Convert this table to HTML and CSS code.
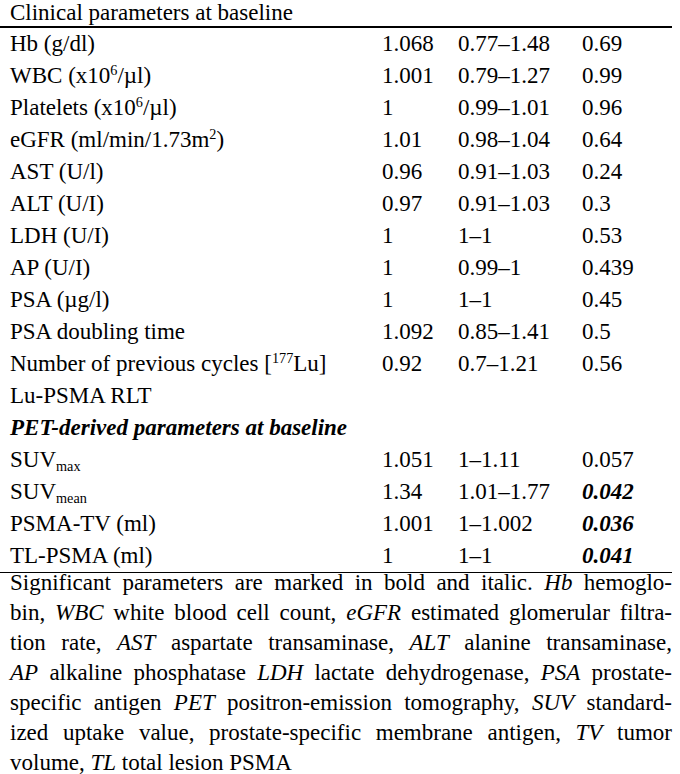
FILE: index.html
```html
<!DOCTYPE html>
<html lang="en">
<head>
  <meta charset="UTF-8">
  <meta name="viewport" content="width=device-width, initial-scale=1.0">
  <title>Clinical parameters at baseline</title>
  <link rel="stylesheet" href="styles.css">
</head>
<body>
  <div class="sheet">
    <div class="caption">Clinical parameters at baseline</div>

    <!-- table body -->
    <table class="params">
      <colgroup>
        <col class="c-name">
        <col class="c-hr">
        <col class="c-ci">
        <col class="c-p">
      </colgroup>
      <tbody>
        <tr><td class="name">Hb (g/dl)</td><td>1.068</td><td>0.77–1.48</td><td>0.69</td></tr>
        <tr><td class="name">WBC (x10<sup>6</sup>/µl)</td><td>1.001</td><td>0.79–1.27</td><td>0.99</td></tr>
        <tr><td class="name">Platelets (x10<sup>6</sup>/µl)</td><td>1</td><td>0.99–1.01</td><td>0.96</td></tr>
        <tr><td class="name">eGFR (ml/min/1.73m<sup>2</sup>)</td><td>1.01</td><td>0.98–1.04</td><td>0.64</td></tr>
        <tr><td class="name">AST (U/l)</td><td>0.96</td><td>0.91–1.03</td><td>0.24</td></tr>
        <tr><td class="name">ALT (U/I)</td><td>0.97</td><td>0.91–1.03</td><td>0.3</td></tr>
        <tr><td class="name">LDH (U/I)</td><td>1</td><td>1–1</td><td>0.53</td></tr>
        <tr><td class="name">AP (U/I)</td><td>1</td><td>0.99–1</td><td>0.439</td></tr>
        <tr><td class="name">PSA (µg/l)</td><td>1</td><td>1–1</td><td>0.45</td></tr>
        <tr><td class="name">PSA doubling time</td><td>1.092</td><td>0.85–1.41</td><td>0.5</td></tr>
        <tr><td class="name">Number of previous cycles [<sup>177</sup>Lu]<br>Lu-PSMA RLT</td><td>0.92</td><td>0.7–1.21</td><td>0.56</td></tr>
        <tr><td class="name group" colspan="4">PET-derived parameters at baseline</td></tr>
        <tr><td class="name">SUV<sub>max</sub></td><td>1.051</td><td>1–1.11</td><td>0.057</td></tr>
        <tr><td class="name">SUV<sub>mean</sub></td><td>1.34</td><td>1.01–1.77</td><td class="sig">0.042</td></tr>
        <tr><td class="name">PSMA-TV (ml)</td><td>1.001</td><td>1–1.002</td><td class="sig">0.036</td></tr>
        <tr><td class="name">TL-PSMA (ml)</td><td>1</td><td>1–1</td><td class="sig">0.041</td></tr>
      </tbody>
    </table>

    <!-- footnote -->
    <div class="notes">
      <p>Significant parameters are marked in bold and italic. <i>Hb</i> hemoglo-</p>
      <p>bin, <i>WBC</i> white blood cell count, <i>eGFR</i> estimated glomerular filtra-</p>
      <p>tion rate, <i>AST</i> aspartate transaminase, <i>ALT</i> alanine transaminase,</p>
      <p><i>AP</i> alkaline phosphatase <i>LDH</i> lactate dehydrogenase, <i>PSA</i> prostate-</p>
      <p>specific antigen <i>PET</i> positron-emission tomography, <i>SUV</i> standard-</p>
      <p>ized uptake value, prostate-specific membrane antigen, <i>TV</i> tumor</p>
      <p class="last">volume, <i>TL</i> total lesion PSMA</p>
    </div>
  </div>
</body>
</html>
```
FILE: styles.css
```css
body {
  margin: 0;
  background: #fff;
  color: #000;
  font-family: "Liberation Serif", "Times New Roman", Times, serif;
  font-size: 23px;
}
.sheet {
  width: 672px;
}

/* caption */
.caption {
  padding-left: 10px;
  line-height: 26px;
  border-bottom: 2px solid #000;
}

/* table */
.params {
  width: 672px;
  border-collapse: collapse;
  table-layout: fixed;
  border-bottom: 1px solid #000;
}
.c-name { width: 382px; }
.c-hr { width: 76px; }
.c-ci { width: 124px; }
.c-p { width: 90px; }
.params td {
  padding: 0;
  line-height: 32px;
  vertical-align: top;
  white-space: nowrap;
}
.params td.name {
  padding-left: 10px;
}
.params td.group,
.params td.sig {
  font-weight: bold;
  font-style: italic;
}
sup {
  font-size: 0.62em;
  line-height: 0;
  vertical-align: 0.55em;
}
sub {
  font-size: 0.62em;
  line-height: 0;
  vertical-align: -0.3em;
}

/* footnote */
.notes {
  padding-left: 10px;
  margin-top: -5px;
}
.notes p {
  margin: 0;
  line-height: 30px;
  text-align: justify;
  text-align-last: justify;
}
.notes p.last {
  text-align-last: left;
}
```
